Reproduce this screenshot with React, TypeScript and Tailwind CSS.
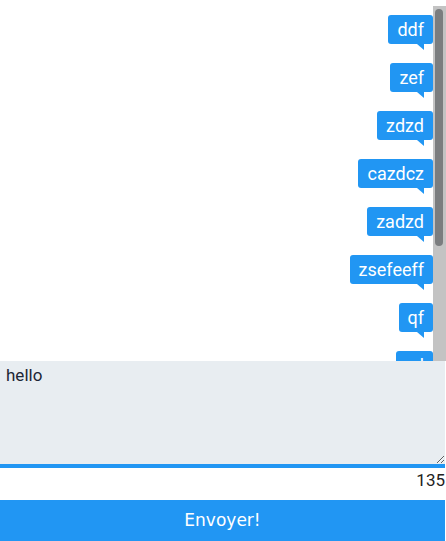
import { useEffect, useRef } from "react";

const messages = ["ddf", "zef", "zdzd", "cazdcz", "zadzd", "zsefeeff", "qf", "zd"];

const Bubble = ({ text }: { text: string }) => (
  <div className="flex flex-col items-end mb-[13px]">
    <div className="bg-[#2196f3] text-white rounded-[3px] px-[9px] h-[29px] leading-[29px] text-[18px] font-['Roboto',sans-serif]">
      {text}
    </div>
    <div className="mr-[9px] w-0 h-0 border-l-[7px] border-l-transparent border-t-[6px] border-t-[#2196f3]" />
  </div>
);

const App = () => {
  const inputRef = useRef<HTMLTextAreaElement>(null);

  useEffect(() => {
    const el = inputRef.current;
    if (el) {
      el.focus();
      el.setSelectionRange(el.value.length, el.value.length);
    }
  }, []);

  return (
    <div className="w-[446px] h-[541px] bg-white flex flex-col pt-[6px] overflow-hidden">
      <div className="h-[355px] flex">
        <div className="flex-1 overflow-hidden pt-[9px]">
          {messages.map((m, i) => (
            <Bubble key={i} text={m} />
          ))}
        </div>
        {/* scrollbar */}
        <div className="w-[13px] h-full bg-[#c3c3c3] pt-[3px] pl-[2px] pr-[3px]">
          <div className="h-[237px] bg-[#7b7d7f] rounded-full" />
        </div>
      </div>
      <textarea
        ref={inputRef}
        defaultValue="hello"
        className="block w-[445px] h-[107px] bg-[#e8edf1] border-b-4 border-[#2196f3] px-[6px] py-[4px] text-[17px] leading-[20px] text-[#1c2636] caret-[#1c2636] font-['Roboto',sans-serif] outline-none"
      />
      <div className="w-[445px] h-[32px] text-right text-[17px] leading-[24px] text-[#222] font-['Roboto',sans-serif]">
        135
      </div>
      <button className="w-[445px] h-[41px] bg-[#2196f3] text-white text-[17px] font-['DejaVu_Sans',sans-serif]">
        Envoyer!
      </button>
    </div>
  );
};

export default App;
